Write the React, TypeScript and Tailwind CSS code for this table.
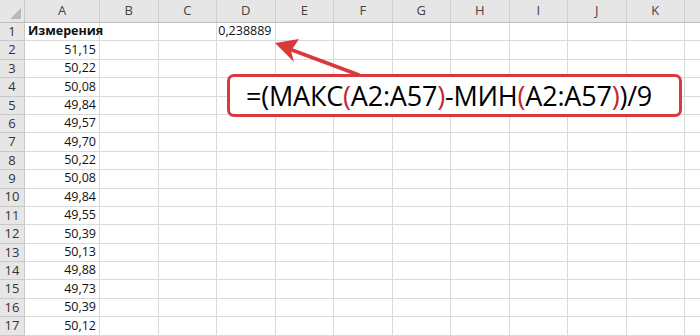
import React from "react";

const COLS = ["A", "B", "C", "D", "E", "F", "G", "H", "I", "J", "K", ""];
const ROW_H = 18.4;

const values = [
  "51,15", "50,22", "50,08", "49,84", "49,57", "49,70", "50,22", "50,08",
  "49,84", "49,55", "50,39", "50,13", "49,88", "49,73", "50,39", "50,12",
];

function colWidth(i: number) {
  return i === 0 ? 75 : 58.5;
}

function Cell({ w, children, bold, align = "right" }: { w: number; children?: React.ReactNode; bold?: boolean; align?: "left" | "right" }) {
  return (
    <div
      className={`shrink-0 h-full border-r border-b border-[#dadada] flex items-center px-[3px] text-[12.5px] text-[#111] overflow-visible whitespace-nowrap ${align === "left" ? "justify-start" : "justify-end"} ${bold ? "font-bold" : ""}`}
      style={{ width: w }}
    >
      {children}
    </div>
  );
}

function Paren({ c }: { c: string }) {
  return <span className="text-[#c0282f]">{c}</span>;
}

export default function App() {
  const rows = Array.from({ length: 17 }, (_, i) => i + 1);
  return (
    <div
      className="relative w-[700px] h-[336px] overflow-hidden bg-white"
      style={{ fontFamily: '"Open Sans", "Noto Sans", sans-serif' }}
    >
      {/* column header strip */}
      <div className="flex h-[23px] bg-[#e6e6e6] border-b border-[#bcbcbc]">
        <div className="relative w-[25px] shrink-0 h-full border-r border-[#c9c9c9]">
          <div className="absolute right-[3px] bottom-[3px] w-0 h-0 border-l-[11px] border-l-transparent border-b-[11px] border-b-[#b9b9b9]" />
        </div>
        {COLS.map((c, i) => (
          <div
            key={i}
            className="shrink-0 h-full border-r border-[#cfcfcf] flex items-center justify-center text-[13px] text-[#444]"
            style={{ width: colWidth(i) }}
          >
            {c}
          </div>
        ))}
      </div>

      {/* grid body */}
      {rows.map((r) => (
        <div key={r} className="flex" style={{ height: ROW_H }}>
          <div className="w-[25px] shrink-0 h-full bg-[#e6e6e6] border-r border-b border-[#c9c9c9] flex items-center justify-center text-[13px] text-[#333]">
            {r}
          </div>
          {COLS.map((c, i) => {
            let content: React.ReactNode = null;
            let bold = false;
            let align: "left" | "right" = "right";
            if (i === 0 && r === 1) {
              content = "Измерения";
              bold = true;
              align = "left";
            } else if (i === 0 && r >= 2) {
              content = values[r - 2];
            } else if (i === 3 && r === 1) {
              content = "0,238889";
            }
            return (
              <Cell key={i} w={colWidth(i)} bold={bold} align={align}>
                {content}
              </Cell>
            );
          })}
        </div>
      ))}

      {/* pointer arrow from the formula callout to D1 */}
      <svg className="absolute inset-0 pointer-events-none" width="700" height="336">
        <line x1="359" y1="75" x2="292" y2="50" stroke="#d9393c" strokeWidth="3.5" strokeLinecap="round" />
        <polygon points="275,43 299,39 291,51 294,62" fill="#d9393c" />
      </svg>

      {/* formula callout */}
      <div className="absolute left-[227px] top-[74px] w-[455px] h-[43px] rounded-[7px] border-[3px] border-[#d9393c] bg-white flex items-center pl-[16px]">
        <span className="text-[27px] leading-none text-black whitespace-nowrap tracking-[-0.2px]" style={{ fontFamily: '"Open Sans", sans-serif' }}>
          =(МАКС<Paren c="(" />A2:A57<Paren c=")" />-МИН<Paren c="(" />A2:A57<Paren c=")" />)/9
        </span>
      </div>
    </div>
  );
}
